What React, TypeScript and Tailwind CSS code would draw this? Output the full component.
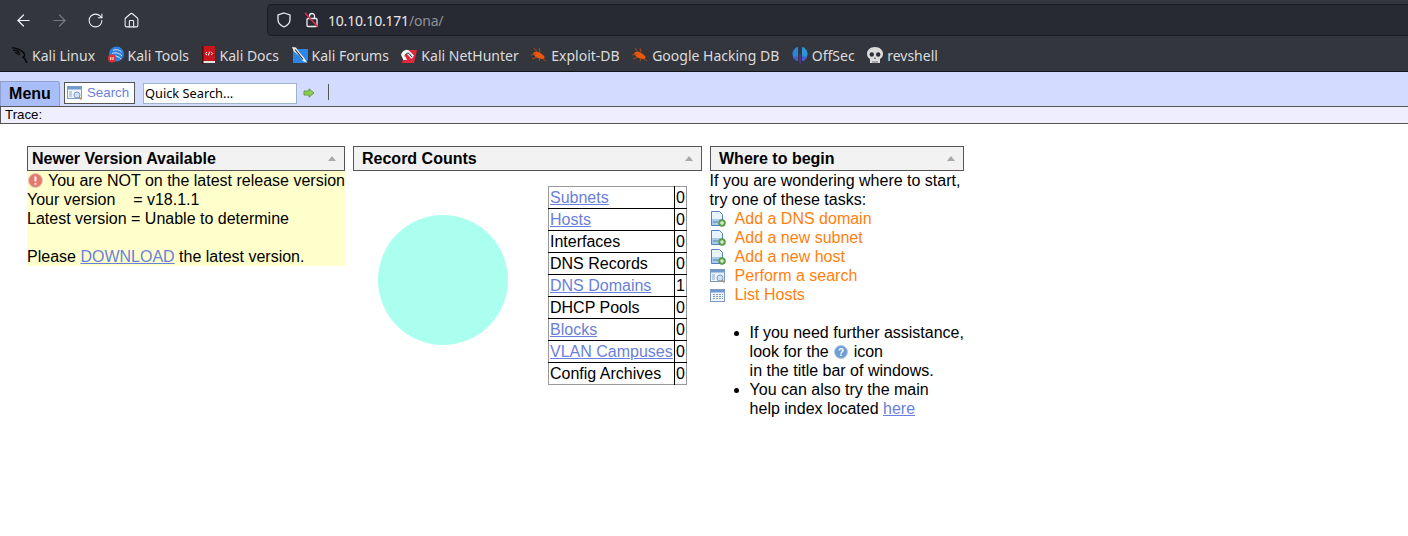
import { ArrowLeft, ArrowRight, Home, RotateCw } from "lucide-react";
import React from "react";

const sans = "font-['Liberation_Sans',Arial,sans-serif]";

function KaliIcon() {
  return (
    <svg width="16" height="16" viewBox="0 0 16 16" fill="none" stroke="#08080a" strokeWidth="1.400">
      <path d="M0 1c3-.5 5 .5 7 1.500 2.500 1.200 5 2.500 5.500 5 .3 1.500-.5 2.500-2 2.500" />
      <path d="M1 3.500c2-.5 4 0 5.500 1.500 1 1 1 2.500 0 3" />
      <path d="M10.500 10c1.500.5 2.500 1.500 3 3 .3 1 .8 2 1.500 3" />
      <path d="M3 5.500c1 0 2 .5 3 1.500" />
    </svg>
  );
}

function ToolsIcon() {
  return (
    <svg width="16" height="18" viewBox="0 0 16 18">
      <circle cx="8.500" cy="8" r="7.500" fill="#2f7fdc" />
      <path d="M5 4.500c3-1.500 6-1 8.500 1.500M4 7.500c4-1.500 7-.5 10 2.500M7 10c2 0 4 1 6 3" stroke="#d7e9fb" strokeWidth="1" fill="none" />
      <circle cx="4" cy="12.500" r="4" fill="#e0312f" />
      <path d="M2.800 11v3M5 11v3" stroke="#fff" strokeWidth="1" />
    </svg>
  );
}

function DocsIcon() {
  return (
    <svg width="14" height="18" viewBox="0 0 14 18">
      <rect x="1" y="0" width="12" height="15" fill="#c8161d" />
      <rect x="1" y="15" width="12" height="2" fill="#e5e5e5" />
      <rect x="0" y="0" width="1.500" height="18" fill="#4a1114" />
      <path d="M5 6L3.500 7.500 5 9M9 6l1.500 1.500L9 9M7.700 5.500L6.300 9.500" stroke="#fff" strokeWidth="1" fill="none" />
    </svg>
  );
}

function ForumsIcon() {
  return (
    <svg width="16" height="16" viewBox="0 0 16 16">
      <path d="M1 2h15v11l-3 3H1z" fill="#2a86e8" />
      <path d="M0 0l4 .5 3.500 5 4 4.500 4 6-4.500-2-4-5.500-5-4z" fill="#f2f2f2" />
      <path d="M3 2.500l4.500 5.500 3.500 4.500" stroke="#222" strokeWidth="1.100" fill="none" />
    </svg>
  );
}

function NetHunterIcon() {
  return (
    <svg width="16" height="16" viewBox="0 0 16 16">
      <path d="M4 3h12l-3 13H1z" fill="#e0283c" />
      <path d="M0 8c1-4 5-6.500 8-4.500l5 5-2.500 3.500-4-4.500c-1-1-2.500 0-2 2l1.500 3.500H2.500z" fill="#f4f4f4" />
      <path d="M4 9.500C4 7 6.500 5.500 8 6.500l3 3.500" stroke="#222" strokeWidth="1" fill="none" />
    </svg>
  );
}

function BugIcon() {
  return (
    <svg width="16" height="14" viewBox="0 0 16 14" fill="none">
      <path d="M2 5c2.500-2.500 7-1.500 11 3 1.500 2 0 3.500-2.500 3C6 10.500 3 8.500 2 5z" fill="#e8590c" />
      <path d="M3 0l3 4M8 0l1 4M0 7l5-1M1 11l5-2M8 13l1-3M15 13l-3-2" stroke="#a8481a" strokeWidth="1" />
    </svg>
  );
}

function OffSecIcon() {
  return (
    <svg width="16" height="18" viewBox="0 0 16 18">
      <path d="M6 1C2.800 1.500.5 4.500.5 8S2.800 14.500 6 15z" fill="#2a86d8" />
      <path d="M10 1c3.200.5 5.500 3.500 5.500 7s-2.300 6.500-5.500 7z" fill="#2a96d8" />
      <path d="M.9 10.500C1.700 13 3.600 14.600 6 15v-4.500zM15.100 10.500c-.8 2.500-2.700 4.100-5.100 4.500v-4.500z" fill="#4a5ccc" />
      <path d="M7.600 8h.9v10h-.9z" fill="#6a35c8" />
    </svg>
  );
}

function SkullIcon() {
  return (
    <svg width="16" height="17" viewBox="0 0 16 17">
      <path d="M8 0c4.500 0 8 2.800 8 6.800 0 2.500-1.200 4.200-3 5.200v4H3v-4C1.200 11 0 9.300 0 6.800 0 2.800 3.500 0 8 0z" fill="#dcdcdc" />
      <circle cx="4.800" cy="7.500" r="2.200" fill="#2e3036" />
      <circle cx="11.200" cy="7.500" r="2.200" fill="#2e3036" />
      <path d="M8 10l-1 2h2z" fill="#55575c" />
      <path d="M6 14v2.500M8 14v2.500M10 14v2.500" stroke="#55575c" strokeWidth="0.800" />
    </svg>
  );
}

const bookmarks: [React.ReactNode, string][] = [
  [<KaliIcon />, "Kali Linux"],
  [<ToolsIcon />, "Kali Tools"],
  [<DocsIcon />, "Kali Docs"],
  [<ForumsIcon />, "Kali Forums"],
  [<NetHunterIcon />, "Kali NetHunter"],
  [<BugIcon />, "Exploit-DB"],
  [<BugIcon />, "Google Hacking DB"],
  [<OffSecIcon />, "OffSec"],
  [<SkullIcon />, "revshell"],
];

function SearchWinIcon({ className }: { className?: string }) {
  return (
    <svg width="16" height="16" viewBox="0 0 16 16" className={className}>
      <rect x="0.500" y="1.500" width="14" height="12" fill="#eef3fa" stroke="#7d9cc4" />
      <rect x="1" y="2" width="13" height="2.500" fill="#6f9ad0" />
      <path d="M2 7h3M2 9h3M2 11h3" stroke="#8fa8c8" />
      <circle cx="10" cy="10" r="3" fill="#cfe2f5" stroke="#7d9cc4" />
      <path d="M12 12l2.500 2.500" stroke="#c98a4b" strokeWidth="1.500" />
    </svg>
  );
}

function NewDocIcon() {
  return (
    <svg width="16" height="16" viewBox="0 0 16 16">
      <path d="M1.500.5h8l3 3v11h-11z" fill="#eaf2fb" stroke="#4f84c0" />
      <path d="M2 8h10v6H2z" fill="#a9cbee" />
      <path d="M3 11h5" stroke="#4f84c0" />
      <circle cx="12" cy="12" r="3.500" fill="#62a84a" stroke="#3f7f33" strokeWidth="0.500" />
      <path d="M10 12h4M12 10v4" stroke="#fff" />
    </svg>
  );
}

function ListIcon() {
  return (
    <svg width="16" height="16" viewBox="0 0 16 16">
      <rect x="0.500" y="2.500" width="14" height="12" fill="#f2f6fb" stroke="#7d9cc4" />
      <rect x="1" y="3" width="13" height="2.500" fill="#6f9ad0" />
      <path d="M3 7.500h10M3 9.500h10M3 11.500h10" stroke="#7d9cc4" strokeDasharray="2 1" />
    </svg>
  );
}

function Chevron() {
  return <span className="ml-auto h-0 w-0 border-x-[4px] border-b-[5px] border-x-transparent border-b-[#a9a9a9]" />;
}

function WidgetTitle({ title, className, textClass }: { title: string; className: string; textClass: string }) {
  return (
    <div className={`flex h-[25px] items-center border border-[#555] bg-[#f2f2f2] pr-[8px] text-[16px] font-bold text-black ${textClass} ${className}`}>
      <span>{title}</span>
      <Chevron />
    </div>
  );
}

const linkCls = "text-[#6a7fdc] underline";

const records: [string, number, boolean][] = [
  ["Subnets", 0, true],
  ["Hosts", 0, true],
  ["Interfaces", 0, false],
  ["DNS Records", 0, false],
  ["DNS Domains", 1, true],
  ["DHCP Pools", 0, false],
  ["Blocks", 0, true],
  ["VLAN Campuses", 0, true],
  ["Config Archives", 0, false],
];

const tasks: [React.ReactNode, string][] = [
  [<NewDocIcon />, "Add a DNS domain"],
  [<NewDocIcon />, "Add a new subnet"],
  [<NewDocIcon />, "Add a new host"],
  [<SearchWinIcon />, "Perform a search"],
  [<ListIcon />, "List Hosts"],
];

function BrowserChrome() {
  return (
    <div className="font-['Noto_Sans',sans-serif] text-[14px] text-[#dcdcde]">
      <div className="flex h-[40px] items-center bg-[#33363d] pl-[14px]">
        <ArrowLeft size={19} strokeWidth={1.500} className="text-[#f0f0f2]" />
        <ArrowRight size={19} strokeWidth={1.500} className="ml-[17px] text-[#77797e]" />
        <RotateCw size={17} strokeWidth={1.500} className="ml-[18px] text-[#f0f0f2]" />
        <Home size={17} strokeWidth={1.500} className="ml-[19px] text-[#f0f0f2]" />
        <div className="ml-[127px] flex h-[32px] flex-1 items-center rounded-l-[5px] border-y border-l border-[#1b1c21] bg-[#282a33] pl-[8px]">
          <svg width="16" height="16" viewBox="0 0 16 16" fill="none" stroke="#eceef0" strokeWidth="1.300">
            <path d="M8 1l6 2v4.500c0 3.500-2.500 6-6 7.500-3.500-1.500-6-4-6-7.500V3z" />
          </svg>
          <svg width="16" height="18" viewBox="0 0 16 18" fill="none" className="ml-[12px]">
            <rect x="3" y="7.500" width="10" height="8" rx="1" stroke="#eceef0" strokeWidth="1.300" />
            <path d="M5.500 7.500V5a2.500 2.500 0 015 0v2.500" stroke="#eceef0" strokeWidth="1.300" />
            <path d="M1 2l13 14" stroke="#e22850" strokeWidth="1.600" />
          </svg>
          <span className="ml-[8px] text-[14px] tracking-[-0.2px] text-[#e8e8ea]">
            10.10.10.171<span className="text-[#8e9096]">/ona/</span>
          </span>
        </div>
      </div>
      <div className="flex h-[32px] items-center gap-[12.500px] border-b border-[#141518] bg-[#33363d] pb-[1px] pl-[12px]">
        {bookmarks.map(([icon, label]) => (
          <div key={label} className="flex items-center gap-[4px] whitespace-nowrap">
            {icon}
            <span>{label}</span>
          </div>
        ))}
      </div>
    </div>
  );
}

function MenuBar() {
  return (
    <div className={sans}>
      <div className="flex h-[35px] items-end border-b border-[#555] bg-[#d3dbfe] pl-[1px]">
        <div className="-ml-[1px] flex h-[25px] w-[60px] items-center justify-center rounded-tr-[3px] border-t border-r border-l border-[#8fa0cf] bg-[#a9bdf8] text-[16px] font-bold text-black">
          Menu
        </div>
        <div className="mb-[2px] ml-[4px] flex h-[22px] w-[71px] items-center border border-[#555] bg-white pl-[2px] text-[13.300px] text-[#6a7fdc]">
          <SearchWinIcon />
          <span className="ml-[4px]">Search</span>
        </div>
        <div className="mb-[2px] ml-[8px] flex h-[21px] w-[154px] items-center border border-[#9db4cc] bg-white pl-[1px] font-['Noto_Sans',sans-serif] text-[12.800px] text-black">
          Quick Search...
        </div>
        <svg width="12" height="10" viewBox="0 0 12 10" className="mb-[8px] ml-[6px]">
          <path d="M1 3h5V.800L11 5 6 9.200V7H1z" fill="#8ccf50" stroke="#4f8f2a" strokeWidth="0.800" />
        </svg>
        <div className="mb-[6px] ml-[13px] h-[16px] w-px bg-[#555]" />
      </div>
      <div className="flex h-[17px] items-center border-b border-l border-[#555] bg-[#eeeeff] pl-[4px] text-[13.300px] text-black">
        Trace:
      </div>
    </div>
  );
}

export default function App() {
  return (
    <div className="h-[536px] w-[1408px] overflow-hidden bg-white">
      <BrowserChrome />
      <MenuBar />
      <div className={`flex items-start pl-[27px] pt-[22px] text-[16px] leading-[19px] text-black ${sans}`}>
        <div className="w-[318px]">
          <WidgetTitle title="Newer Version Available" className="w-[318px]" textClass="pl-[4px]" />
          <div className="bg-[#ffffcc] whitespace-nowrap">
            <div className="flex items-center">
              <svg width="15" height="15" viewBox="0 0 15 15" className="mr-[5px] ml-[1px]">
                <circle cx="7.500" cy="7.500" r="7" fill="#e8776c" stroke="#d9d0b0" />
                <path d="M7.500 3.500v5" stroke="#fff" strokeWidth="2" />
                <circle cx="7.500" cy="11" r="1.100" fill="#fff" />
              </svg>
              You are NOT on the latest release version
            </div>
            <div className="whitespace-pre">Your version    = v18.1.1</div>
            <div>Latest version = Unable to determine</div>
            <div className="h-[19px]" />
            <div>
              Please <span className={linkCls}>DOWNLOAD</span> the latest version.
            </div>
          </div>
        </div>

        <div className="ml-[8px] w-[349px]">
          <WidgetTitle title="Record Counts" className="w-[349px]" textClass="pl-[8px]" />
          <div className="flex items-start">
            <svg width="130" height="130" viewBox="0 0 130 130" className="mt-[44px] ml-[25px]">
              <circle cx="65" cy="65" r="65" fill="#aaffee" />
            </svg>
            <table className="mt-[15px] ml-[40px] w-[139px] border-collapse border border-[#999]">
              <tbody>
                {records.map(([name, count, link]) => (
                  <tr key={name} className="h-[22px] border-b border-black last:border-b-0">
                    <td className="border-r border-black pl-[1px] whitespace-nowrap">
                      {link ? <span className={linkCls}>{name}</span> : name}
                    </td>
                    <td className="px-[1px]">{count}</td>
                  </tr>
                ))}
              </tbody>
            </table>
          </div>
        </div>

        <div className="ml-[8px] w-[254px]">
          <WidgetTitle title="Where to begin" className="w-[254px]" textClass="pl-[8px]" />
          <div className="-ml-[0.4px]">If you are wondering where to start,</div>
          <div className="-ml-[0.4px]">try one of these tasks:</div>
          {tasks.map(([icon, label]) => (
            <div key={label} className="flex h-[19px] items-center">
              {icon}
              <span className="ml-[8.600px] text-[#ff7f0e]">{label}</span>
            </div>
          ))}
          <ul className="mt-[19px] list-disc pl-[39.600px] whitespace-nowrap">
            <li>
              If you need further assistance,
              <br />
              look for the{" "}
              <svg width="16" height="16" viewBox="0 0 16 16" className="inline align-[-3px]">
                <circle cx="8" cy="8" r="6.500" fill="#6f9cd4" stroke="#b4cbe6" />
                <text x="8" y="11.500" textAnchor="middle" fontSize="10" fontWeight="700" fill="#fff" fontFamily="Liberation Sans">
                  ?
                </text>
              </svg>{" "}
              icon
              <br />
              in the title bar of windows.
            </li>
            <li>
              You can also try the main
              <br />
              help index located <span className={linkCls}>here</span>
            </li>
          </ul>
        </div>
      </div>
    </div>
  );
}
